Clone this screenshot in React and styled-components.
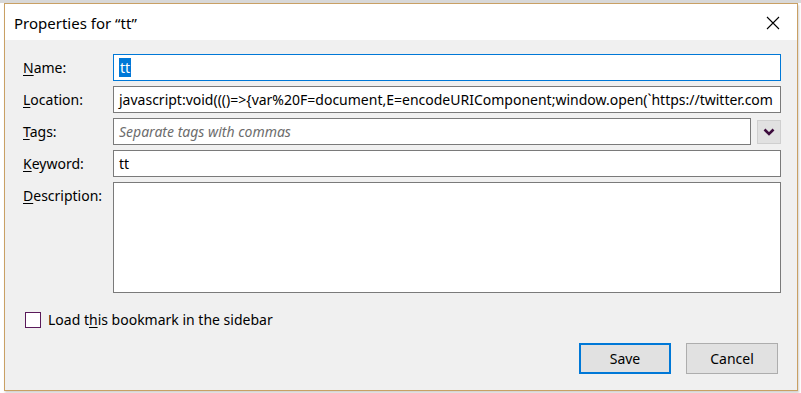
import React from "react";
import styled, { createGlobalStyle } from "styled-components";

const GlobalStyle = createGlobalStyle`
  html, body {
    margin: 0;
    padding: 0;
    background: #ffffff;
  }
  body {
    font-family: "Noto Sans", "Open Sans", sans-serif;
  }
`;

function CloseIcon() {
  return (
    <svg width="14" height="14" viewBox="0 0 14 14">
      <path d="M1 1 L13 13 M13 1 L1 13" stroke="#000" strokeWidth="1.1" fill="none" />
    </svg>
  );
}

function ChevronIcon() {
  return (
    <svg width="12" height="8" viewBox="0 0 12 8">
      <path d="M1.5 1.5 L6 6 L10.5 1.5" stroke="#3d0c3d" strokeWidth="2.6" fill="none" />
    </svg>
  );
}

export default function App() {
  return (
    <>
      <GlobalStyle />
      <Backdrop>
        <Dialog>
          <TitleBar>
            <Title>Properties for “tt”</Title>
            <CloseButton>
              <CloseIcon />
            </CloseButton>
          </TitleBar>
          <Body>
            <Form>
              <Label>
                <u>N</u>ame:
              </Label>
              <Field focused>
                <Selected>tt</Selected>
              </Field>

              <Label>
                <u>L</u>ocation:
              </Label>
              <Field>
                javascript:void((()=&gt;{"{"}var%20F=document,E=encodeURIComponent;window.open(`https://twitter.com
              </Field>

              <Label>
                <u>T</u>ags:
              </Label>
              <TagsRow>
                <Field placeholder="true">Separate tags with commas</Field>
                <DropButton>
                  <ChevronIcon />
                </DropButton>
              </TagsRow>

              <Label>
                <u>K</u>eyword:
              </Label>
              <Field>tt</Field>

              <Label>
                <u>D</u>escription:
              </Label>
              <TextArea />
            </Form>

            <CheckRow>
              <CheckBox />
              <span>
                Load t<u>h</u>is bookmark in the sidebar
              </span>
            </CheckRow>

            <Buttons>
              <Button primary>Save</Button>
              <Button>Cancel</Button>
            </Buttons>
          </Body>
        </Dialog>
      </Backdrop>
    </>
  );
}

const Backdrop = styled.div`
  width: 801px;
  height: 393px;
  box-sizing: border-box;
  padding: 3px 4px 0 4px;
  background: linear-gradient(to bottom, #d8d8d8 0, #d8d8d8 3px, #ffffff 3px);
  overflow: hidden;
`;

const Dialog = styled.div`
  width: 794px;
  height: 388px;
  box-sizing: border-box;
  border: 1px solid #c9a064;
  background: #f0f0f0;
  display: flex;
  flex-direction: column;
  box-shadow: 1px 2px 2px rgba(0, 0, 0, 0.18);
`;

const TitleBar = styled.div`
  height: 36px;
  background: #ffffff;
  display: flex;
  align-items: center;
  justify-content: space-between;
  padding: 0 14px 0 9px;
`;

const Title = styled.div`
  font-size: 15px;
  color: #000;
  padding-top: 1px;
`;

const CloseButton = styled.div`
  width: 20px;
  height: 20px;
  display: flex;
  align-items: center;
  justify-content: center;
  margin-top: 2px;
`;

const Body = styled.div`
  flex: 1;
  display: flex;
  flex-direction: column;
  padding: 14px 16px 0 18px;
`;

const Form = styled.div`
  display: grid;
  grid-template-columns: 90px 1fr;
  row-gap: 5px;
  align-items: start;
`;

const Label = styled.div`
  font-size: 14px;
  line-height: 27px;
  color: #000;
  white-space: nowrap;

  u {
    text-underline-offset: 2px;
  }
`;

const Field = styled.div`
  height: 27px;
  box-sizing: border-box;
  border: 1px solid ${(p) => (p.focused ? "#0078d7" : "#7a7a7a")};
  background: #fff;
  font-size: 14px;
  line-height: 25px;
  padding: 0 5px;
  white-space: nowrap;
  overflow: hidden;
  color: ${(p) => (p.placeholder ? "#6d6d6d" : "#000")};
  font-style: ${(p) => (p.placeholder ? "italic" : "normal")};
  flex: 1;
`;

const Selected = styled.span`
  background: #0078d7;
  color: #fff;
  display: inline-block;
  line-height: 19px;
  padding: 0 1px;
`;

const TagsRow = styled.div`
  display: flex;
  align-items: center;
  gap: 6px;
`;

const DropButton = styled.div`
  width: 24px;
  height: 24px;
  box-sizing: border-box;
  background: #e1e1e1;
  border: 1px solid #cfcfcf;
  display: flex;
  align-items: center;
  justify-content: center;
`;

const TextArea = styled.div`
  height: 111px;
  box-sizing: border-box;
  border: 1px solid #7a7a7a;
  background: #fff;
`;

const CheckRow = styled.div`
  display: flex;
  align-items: center;
  gap: 7px;
  margin: 17px 0 0 2px;
  font-size: 14px;
  color: #000;

  u {
    text-underline-offset: 2px;
  }
`;

const CheckBox = styled.div`
  width: 16px;
  height: 16px;
  box-sizing: border-box;
  border: 1px solid #5a1a5a;
  background: #fff;
`;

const Buttons = styled.div`
  display: flex;
  justify-content: flex-end;
  gap: 15px;
  margin-top: 14px;
  padding-right: 3px;
`;

const Button = styled.div`
  width: 92px;
  height: 31px;
  box-sizing: border-box;
  background: #e1e1e1;
  border: ${(p) => (p.primary ? "2px solid #0078d7" : "1px solid #adadad")};
  display: flex;
  align-items: center;
  justify-content: center;
  font-size: 14px;
  color: #000;
`;
